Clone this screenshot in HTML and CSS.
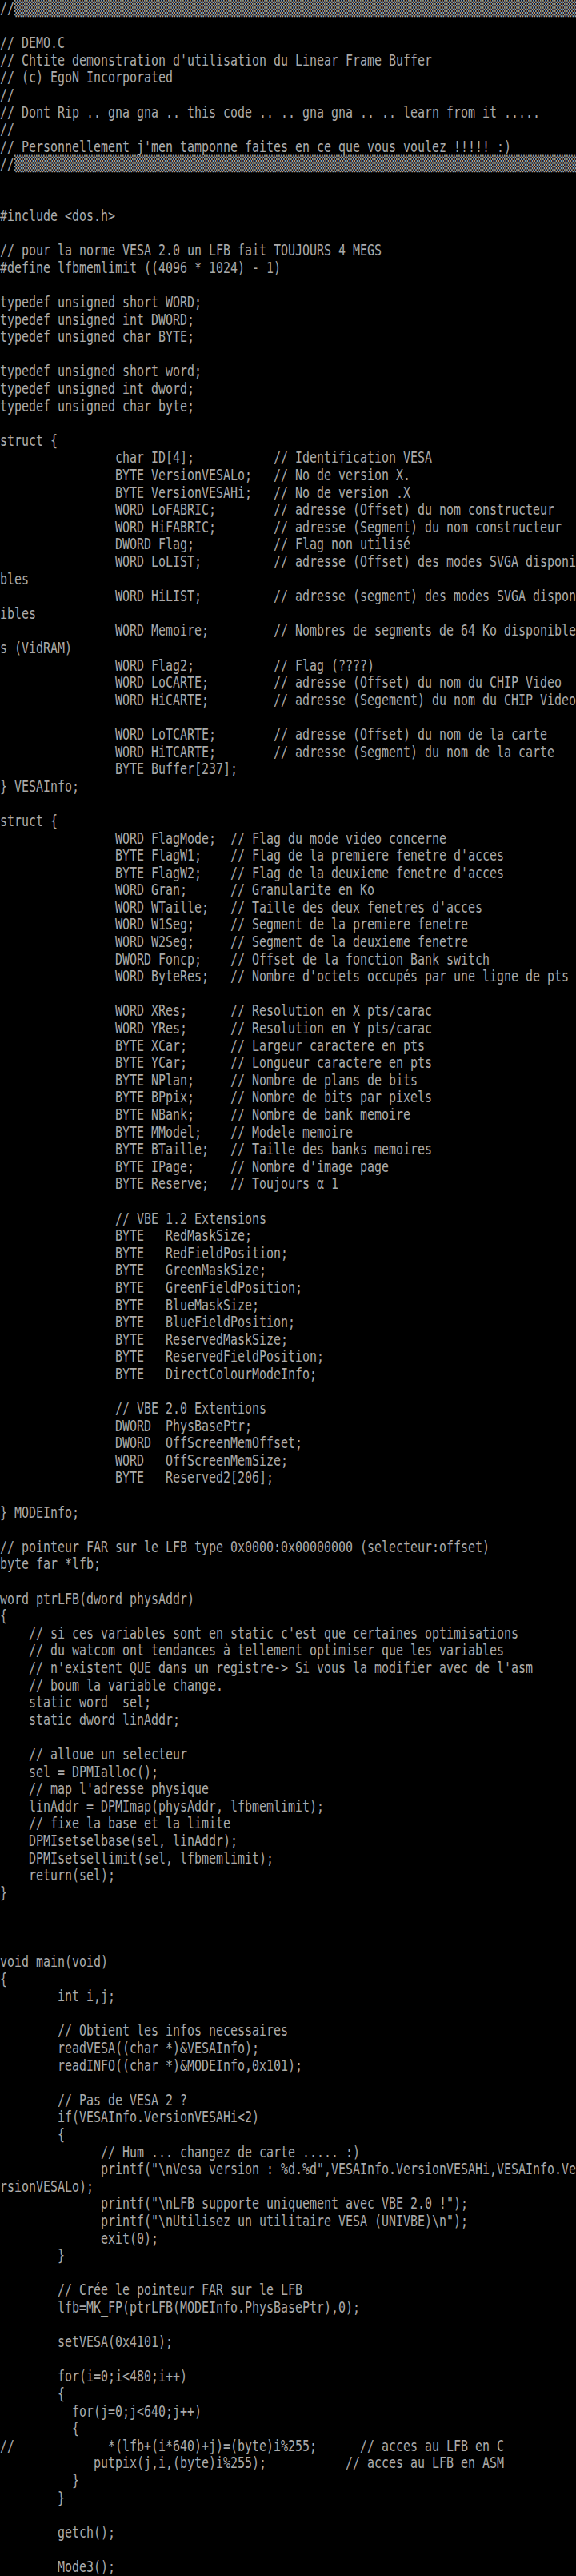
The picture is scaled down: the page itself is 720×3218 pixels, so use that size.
FILE: index.html
```html
<html>
    <head>
        <title>DEMO.C</title>
        <link rel="stylesheet" href="styles.css">
    </head>
    <body>
        <div class="screen">
<pre class="listing">//<span class="shade">▒▒▒▒▒▒▒▒▒▒▒▒▒▒▒▒▒▒▒▒▒▒▒▒▒▒▒▒▒▒▒▒▒▒▒▒▒▒▒▒▒▒▒▒▒▒▒▒▒▒▒▒▒▒▒▒▒▒▒▒▒▒▒▒▒▒▒▒▒▒▒▒▒▒▒▒▒▒▒▒</span>

// DEMO.C
// Chtite demonstration d'utilisation du Linear Frame Buffer
// (c) EgoN Incorporated
//
// Dont Rip .. gna gna .. this code .. .. gna gna .. .. learn from it .....
//
// Personnellement j'men tamponne faites en ce que vous voulez !!!!! :)
//<span class="shade">▒▒▒▒▒▒▒▒▒▒▒▒▒▒▒▒▒▒▒▒▒▒▒▒▒▒▒▒▒▒▒▒▒▒▒▒▒▒▒▒▒▒▒▒▒▒▒▒▒▒▒▒▒▒▒▒▒▒▒▒▒▒▒▒▒▒▒▒▒▒▒▒▒▒▒▒▒▒▒▒</span>


#include &lt;dos.h&gt;

// pour la norme VESA 2.0 un LFB fait TOUJOURS 4 MEGS
#define lfbmemlimit ((4096 * 1024) - 1)

typedef unsigned short WORD;
typedef unsigned int DWORD;
typedef unsigned char BYTE;

typedef unsigned short word;
typedef unsigned int dword;
typedef unsigned char byte;

struct {
                char ID[4];           // Identification VESA
                BYTE VersionVESALo;   // No de version X.
                BYTE VersionVESAHi;   // No de version .X
                WORD LoFABRIC;        // adresse (Offset) du nom constructeur
                WORD HiFABRIC;        // adresse (Segment) du nom constructeur
                DWORD Flag;           // Flag non utilisé
                WORD LoLIST;          // adresse (Offset) des modes SVGA disponi
bles
                WORD HiLIST;          // adresse (segment) des modes SVGA dispon
ibles
                WORD Memoire;         // Nombres de segments de 64 Ko disponible
s (VidRAM)
                WORD Flag2;           // Flag (????)
                WORD LoCARTE;         // adresse (Offset) du nom du CHIP Video
                WORD HiCARTE;         // adresse (Segement) du nom du CHIP Video

                WORD LoTCARTE;        // adresse (Offset) du nom de la carte
                WORD HiTCARTE;        // adresse (Segment) du nom de la carte
                BYTE Buffer[237];
} VESAInfo;

struct {
                WORD FlagMode;  // Flag du mode video concerne
                BYTE FlagW1;    // Flag de la premiere fenetre d'acces
                BYTE FlagW2;    // Flag de la deuxieme fenetre d'acces
                WORD Gran;      // Granularite en Ko
                WORD WTaille;   // Taille des deux fenetres d'acces
                WORD W1Seg;     // Segment de la premiere fenetre
                WORD W2Seg;     // Segment de la deuxieme fenetre
                DWORD Foncp;    // Offset de la fonction Bank switch
                WORD ByteRes;   // Nombre d'octets occupés par une ligne de pts

                WORD XRes;      // Resolution en X pts/carac
                WORD YRes;      // Resolution en Y pts/carac
                BYTE XCar;      // Largeur caractere en pts
                BYTE YCar;      // Longueur caractere en pts
                BYTE NPlan;     // Nombre de plans de bits
                BYTE BPpix;     // Nombre de bits par pixels
                BYTE NBank;     // Nombre de bank memoire
                BYTE MModel;    // Modele memoire
                BYTE BTaille;   // Taille des banks memoires
                BYTE IPage;     // Nombre d'image page
                BYTE Reserve;   // Toujours α 1

                // VBE 1.2 Extensions
                BYTE   RedMaskSize;
                BYTE   RedFieldPosition;
                BYTE   GreenMaskSize;
                BYTE   GreenFieldPosition;
                BYTE   BlueMaskSize;
                BYTE   BlueFieldPosition;
                BYTE   ReservedMaskSize;
                BYTE   ReservedFieldPosition;
                BYTE   DirectColourModeInfo;

                // VBE 2.0 Extentions
                DWORD  PhysBasePtr;
                DWORD  OffScreenMemOffset;
                WORD   OffScreenMemSize;
                BYTE   Reserved2[206];

} MODEInfo;

// pointeur FAR sur le LFB type 0x0000:0x00000000 (selecteur:offset)
byte far *lfb;

word ptrLFB(dword physAddr)
{
    // si ces variables sont en static c'est que certaines optimisations
    // du watcom ont tendances à tellement optimiser que les variables
    // n'existent QUE dans un registre-&gt; Si vous la modifier avec de l'asm
    // boum la variable change.
    static word  sel;
    static dword linAddr;

    // alloue un selecteur
    sel = DPMIalloc();
    // map l'adresse physique
    linAddr = DPMImap(physAddr, lfbmemlimit);
    // fixe la base et la limite
    DPMIsetselbase(sel, linAddr);
    DPMIsetsellimit(sel, lfbmemlimit);
    return(sel);
}



void main(void)
{
        int i,j;

        // Obtient les infos necessaires
        readVESA((char *)&amp;VESAInfo);
        readINFO((char *)&amp;MODEInfo,0x101);

        // Pas de VESA 2 ?
        if(VESAInfo.VersionVESAHi&lt;2)
        {
              // Hum ... changez de carte ..... :)
              printf("\nVesa version : %d.%d",VESAInfo.VersionVESAHi,VESAInfo.Ve
rsionVESALo);
              printf("\nLFB supporte uniquement avec VBE 2.0 !");
              printf("\nUtilisez un utilitaire VESA (UNIVBE)\n");
              exit(0);
        }

        // Crée le pointeur FAR sur le LFB
        lfb=MK_FP(ptrLFB(MODEInfo.PhysBasePtr),0);

        setVESA(0x4101);

        for(i=0;i&lt;480;i++)
        {
          for(j=0;j&lt;640;j++)
          {
//             *(lfb+(i*640)+j)=(byte)i%255;      // acces au LFB en C
             putpix(j,i,(byte)i%255);           // acces au LFB en ASM
          }
        }

        getch();

        Mode3();
}</pre>
        </div>
    </body>
</html>
```

FILE: styles.css
```css
* {
box-sizing: border-box;
}
html, body {
margin: 0;
padding: 0;
background-color: #000;
}
.screen {
width: 720px;
height: 3218px;
overflow: hidden;
background-color: #000;
}
.listing {
margin: 0;
width: 915px;
font-family: "DejaVu Sans Mono", "Liberation Mono", monospace;
font-size: 19px;
line-height: 21.597px;
color: #aaaaaa;
white-space: pre;
transform: scaleX(0.7868);
transform-origin: 0 0;
}
.shade {
color: #a8a8a8;
}
```
